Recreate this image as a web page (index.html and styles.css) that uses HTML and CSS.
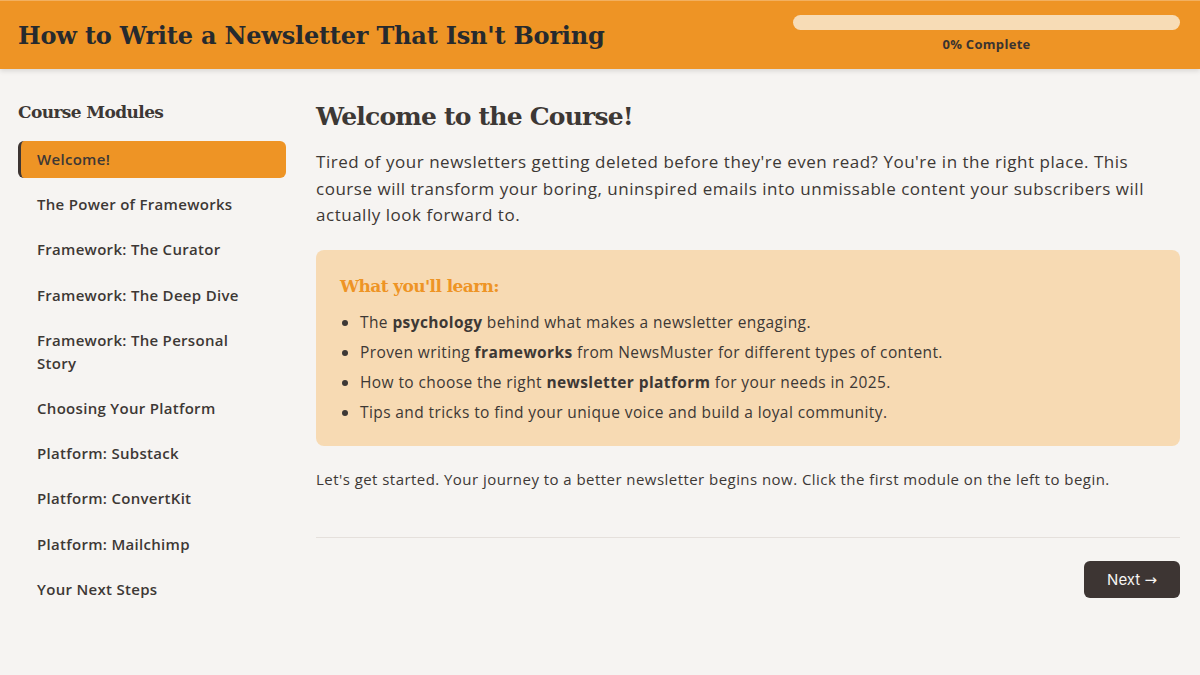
FILE: index.html
```html
<!DOCTYPE html>
<html lang="en">
<head>
<meta charset="utf-8">
<title>How to Write a Newsletter That Isn't Boring</title>
<link rel="stylesheet" href="styles.css">
</head>
<body>
<header class="topbar">
  <h1 class="title">How to Write a Newsletter That Isn't Boring</h1>
  <div class="progress">
    <div class="progress-track"><div class="progress-fill" style="width:0%"></div></div>
    <div class="progress-label">0% Complete</div>
  </div>
</header>
<div class="layout">
  <aside class="sidebar">
    <h2 class="sidebar-title">Course Modules</h2>
    <ul class="modules">
      <li class="module active">Welcome!</li>
      <li class="module">The Power of Frameworks</li>
      <li class="module">Framework: The Curator</li>
      <li class="module">Framework: The Deep Dive</li>
      <li class="module">Framework: The Personal Story</li>
      <li class="module">Choosing Your Platform</li>
      <li class="module">Platform: Substack</li>
      <li class="module">Platform: ConvertKit</li>
      <li class="module">Platform: Mailchimp</li>
      <li class="module">Your Next Steps</li>
    </ul>
  </aside>
  <main class="content">
    <h2 class="content-title">Welcome to the Course!</h2>
    <p class="lead">Tired of your newsletters getting deleted before they're even read? You're in the right place. This course will transform your boring, uninspired emails into unmissable content your subscribers will actually look forward to.</p>
    <section class="learn">
      <h3 class="learn-title">What you'll learn:</h3>
      <ul class="learn-list">
        <li>The <strong>psychology</strong> behind what makes a newsletter engaging.</li>
        <li>Proven writing <strong>frameworks</strong> from NewsMuster for different types of content.</li>
        <li>How to choose the right <strong>newsletter platform</strong> for your needs in 2025.</li>
        <li>Tips and tricks to find your unique voice and build a loyal community.</li>
      </ul>
    </section>
    <p class="closing">Let's get started. Your journey to a better newsletter begins now. Click the first module on the left to begin.</p>
    <div class="nav-row">
      <button class="next-btn">Next <span class="arrow">→</span></button>
    </div>
  </main>
</div>
</body>
</html>
```
FILE: styles.css
```css
* { box-sizing: border-box; }
html, body { margin: 0; padding: 0; }
body {
  background: #f6f4f2;
  color: #3d3835;
  font-family: "Open Sans", "DejaVu Sans", sans-serif;
  width: 1200px;
  height: 675px;
  overflow: hidden;
}
.topbar {
  height: 69px;
  background: #ee9425;
  border-top: 1px solid #f2b060;
  display: flex;
  align-items: center;
  justify-content: space-between;
  padding: 0 20px 0 18px;
  box-shadow: 0 2px 5px rgba(0,0,0,0.12);
  position: relative;
}
.title {
  margin: 0;
  font-family: "DejaVu Serif", "Liberation Serif", serif;
  font-weight: bold;
  font-size: 24px;
  letter-spacing: -0.2px;
  color: #262a2e;
}
.progress {
  width: 387px;
  display: flex;
  flex-direction: column;
  align-items: center;
  gap: 5px;
  margin-top: -3px;
}
.progress-track {
  width: 100%;
  height: 15px;
  border-radius: 8px;
  background: #f7dcb6;
  overflow: hidden;
}
.progress-fill { height: 100%; background: #3d3533; }
.progress-label {
  font-size: 13px;
  font-weight: 700;
  letter-spacing: 0.3px;
  color: #3a3330;
}
.layout {
  display: flex;
  padding: 30px 20px 0 18px;
}
.sidebar {
  width: 268px;
  flex: none;
}
.sidebar-title {
  margin: 0 0 16px;
  font-family: "DejaVu Serif", serif;
  font-weight: bold;
  font-size: 17px;
  letter-spacing: -0.6px;
  color: #3d3835;
  line-height: 26px;
}
.modules { list-style: none; margin: 0; padding: 0; }
.module {
  line-height: 23px;
  font-size: 15px;
  font-weight: 600;
  letter-spacing: 0.3px;
  color: #3d3835;
  margin-bottom: 8.2px;
  border-radius: 6px;
  border-left: 3px solid transparent;
  padding: 7px 40px 7px 16px;
}
.module.active {
  background: #ee9425;
  border-left-color: #3d3533;
}
.content {
  flex: 1;
  margin-left: 30px;
}
.content-title {
  margin: 0;
  font-family: "DejaVu Serif", serif;
  font-weight: bold;
  font-size: 25px;
  letter-spacing: -0.8px;
  line-height: 36px;
  color: #3d3835;
}
.lead {
  margin: 14px 0 21px;
  font-size: 17px;
  letter-spacing: 0.52px;
  line-height: 26.5px;
  color: #3d3835;
}
.learn {
  background: #f7dab3;
  border-radius: 8px;
  padding: 23px 24px 19px;
}
.learn-title {
  margin: 0 0 8px;
  font-family: "DejaVu Serif", serif;
  font-weight: bold;
  font-size: 17px;
  letter-spacing: -0.6px;
  color: #ee9425;
  line-height: 26px;
}
.learn-list {
  margin: 0;
  padding-left: 20px;
  font-size: 15.5px;
  letter-spacing: 0.4px;
  line-height: 30px;
}
.learn-list strong { font-weight: 700; }
.closing {
  margin: 22px 0 0;
  font-size: 15px;
  letter-spacing: 0.45px;
  line-height: 22px;
}
.nav-row {
  margin-top: 47px;
  border-top: 1px solid #e5e0dc;
  padding-top: 23px;
  display: flex;
  justify-content: flex-end;
}
.next-btn {
  background: #3d3533;
  color: #f6f4f2;
  border: none;
  border-radius: 6px;
  font-family: "Inter", "Liberation Sans", sans-serif;
  font-size: 15px;
  height: 37px;
  padding: 0 23px;
}
.arrow { font-family: "DejaVu Sans", sans-serif; }
```
